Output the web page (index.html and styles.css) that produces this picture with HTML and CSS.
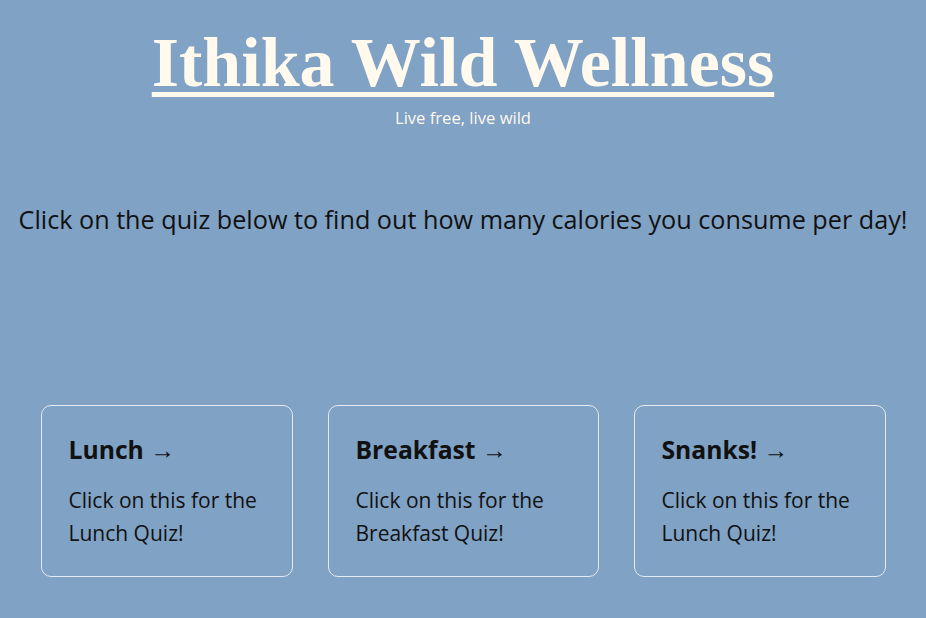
FILE: index.html
```html
<!DOCTYPE html>
<html lang="en">
<head>
<meta charset="utf-8">
<title>Ithika Wild Wellness</title>
<link rel="stylesheet" href="styles.css">
</head>
<body>
<header class="header">
  <h1 class="title"><a class="title-link" href="#">Ithika Wild Wellness</a></h1>
  <p class="tagline">Live free, live wild</p>
</header>
<main class="main">
  <p class="intro">Click on the quiz below to find out how many calories you consume per day!</p>
  <div class="grid">
    <a class="card card-narrow" href="#">
      <h2 class="card-title">Lunch &rarr;</h2>
      <p class="card-text">Click on this for the Lunch Quiz!</p>
    </a>
    <a class="card card-wide" href="#">
      <h2 class="card-title">Breakfast &rarr;</h2>
      <p class="card-text">Click on this for the Breakfast Quiz!</p>
    </a>
    <a class="card card-narrow" href="#">
      <h2 class="card-title">Snanks! &rarr;</h2>
      <p class="card-text">Click on this for the Lunch Quiz!</p>
    </a>
  </div>
</main>
</body>
</html>
```
FILE: styles.css
```css
html, body {
  margin: 0;
  padding: 0;
}
body {
  background: #7fa2c5;
  font-family: "Open Sans", "Noto Sans", sans-serif;
  color: #111;
  min-height: 618px;
}
.header {
  display: flex;
  flex-direction: column;
  align-items: center;
  padding-top: 23px;
}
.title {
  margin: 0;
  font-family: "Liberation Serif", "Times New Roman", serif;
  font-weight: bold;
  font-size: 70px;
  line-height: 80px;
}
.title-link {
  color: #fff9ee;
  text-decoration: underline;
  text-decoration-thickness: 5px;
  text-underline-offset: 6px;
}
.tagline {
  margin: 5px 0 0;
  font-size: 16.6px;
  line-height: 20px;
  color: #fff9ee;
}
.main {
  display: flex;
  flex-direction: column;
  align-items: center;
}
.intro {
  margin: 75px 0 0;
  font-size: 25.2px;
  line-height: 32px;
  text-align: center;
}
.grid {
  display: flex;
  justify-content: center;
  gap: 35px;
  margin-top: 170px;
}
.card {
  box-sizing: border-box;
  height: 172px;
  padding: 28px 27px 24px;
  border: 1px solid #e6e9ee;
  border-radius: 10px;
  color: #111;
  text-decoration: none;
}
.card-narrow {
  width: 252px;
}
.card-wide {
  width: 271px;
}
.card-title {
  margin: 0 0 18px;
  font-size: 24.7px;
  line-height: 32px;
  font-weight: bold;
}
.card-text {
  margin: 0;
  font-size: 21px;
  line-height: 33px;
}
```
